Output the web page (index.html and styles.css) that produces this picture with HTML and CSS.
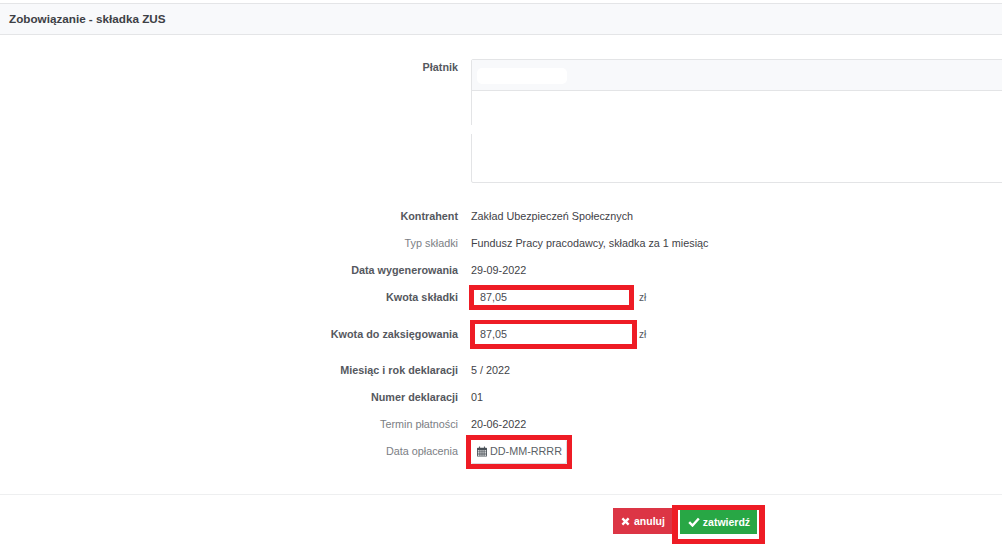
FILE: index.html
```html
<!DOCTYPE html>
<html lang="pl">
<head>
<meta charset="utf-8">
<title>Zobowiązanie - składka ZUS</title>
<link rel="stylesheet" href="styles.css">
</head>
<body>
<div class="page">
  <header class="head">Zobowiązanie - składka ZUS</header>
  <main class="form">
    <div class="row row-card">
      <div class="label strong">Płatnik</div>
      <div class="card">
        <div class="card-head"><span class="smear"></span></div>
        <div class="card-body"><span class="gap"></span></div>
      </div>
    </div>
    <div class="row"><div class="label strong">Kontrahent</div><div class="value">Zakład Ubezpieczeń Społecznych</div></div>
    <div class="row"><div class="label">Typ składki</div><div class="value">Fundusz Pracy pracodawcy, składka za 1 miesiąc</div></div>
    <div class="row"><div class="label strong">Data wygenerowania</div><div class="value">29-09-2022</div></div>
    <div class="row row-amount">
      <div class="label strong">Kwota składki</div>
      <div class="value amount">
        <div class="mark mark-a"><div class="input">87,05</div></div>
        <span class="unit">zł</span>
      </div>
    </div>
    <div class="row row-tall">
      <div class="label strong">Kwota do zaksięgowania</div>
      <div class="value amount">
        <div class="mark mark-b"><div class="input">87,05</div></div>
        <span class="unit unit-b">zł</span>
      </div>
    </div>
    <div class="row"><div class="label strong">Miesiąc i rok deklaracji</div><div class="value">5 / 2022</div></div>
    <div class="row"><div class="label strong">Numer deklaracji</div><div class="value">01</div></div>
    <div class="row"><div class="label">Termin płatności</div><div class="value">20-06-2022</div></div>
    <div class="row row-amount">
      <div class="label">Data opłacenia</div>
      <div class="value amount">
        <div class="mark mark-c">
          <div class="date">
            <svg class="cal" viewBox="0 0 12 12" width="10" height="11" aria-hidden="true">
              <path fill="#495057" fill-rule="evenodd" d="M2.5 0h1.2v1.5h4.6V0h1.2v1.5H11a1 1 0 0 1 1 1V11a1 1 0 0 1-1 1H1a1 1 0 0 1-1-1V2.500a1 1 0 0 1 1-1h1.500zM1 4.500V6h2V4.500zm3 0V6h1.500V4.500zm2.500 0V6H8V4.500zm2.500 0V6h2V4.500zM1 7v1.500h2V7zm3 0v1.500h1.500V7zm2.500 0v1.500H8V7zM9 7v1.500h2V7zM1 9.500V11h2V9.500zm3 0V11h1.500V9.500zm2.500 0V11H8V9.500zm2.500 0V11h2V9.500z"/>
            </svg>
            <span>DD-MM-RRRR</span>
          </div>
        </div>
      </div>
    </div>
  </main>
  <footer class="foot">
    <button class="btn btn-cancel" type="button">
      <svg viewBox="0 0 10 10" width="9" height="9" aria-hidden="true"><path d="M1.500 1.500l7 7M8.500 1.500l-7 7" stroke="#fff" stroke-width="2.600" fill="none"/></svg>
      anuluj
    </button>
    <div class="mark mark-d">
      <button class="btn btn-ok" type="button">
        <svg viewBox="0 0 12 10" width="12" height="10" aria-hidden="true"><path d="M1.200 5.200l3.300 3.300 6.300-7" stroke="#fff" stroke-width="2.400" fill="none"/></svg>
        zatwierdź
      </button>
    </div>
  </footer>
</div>
</body>
</html>
```
FILE: styles.css
```css
* { box-sizing: border-box; }
html, body { margin: 0; padding: 0; background: #fff; }
.page {
  width: 1002px;
  height: 544px;
  overflow: hidden;
  padding-top: 3px;
  font-family: "Liberation Sans", Arial, sans-serif;
  font-size: 10.8px;
  color: #3f4247;
}
.head {
  height: 32px;
  padding-left: 9px;
  line-height: 29px;
  font-size: 11.7px;
  font-weight: bold;
  color: #3d4045;
  background: #f8f9fb;
  border-top: 1px solid #e4e5e7;
  border-bottom: 1px solid #e4e5e7;
}
.form { padding-top: 24px; height: 460px; border-bottom: 1px solid #eeeff0; }
.row {
  display: flex;
  height: 27px;
  padding-bottom: 2px;
  align-items: center;
  white-space: nowrap;
}
.row-card { height: 124px; padding-bottom: 0; align-items: flex-start; margin-bottom: 20px; }
.row-tall { height: 46px; padding-bottom: 0; }
.row-amount { padding-bottom: 0; }
.label {
  width: 458px;
  text-align: right;
  color: #7b7e84;
  flex: none;
}
.row-amount .label { padding-bottom: 2px; }
.label.strong { font-weight: bold; color: #55585e; }
.row-card .label { padding-top: 2px; }
.value { margin-left: 13px; display: flex; align-items: center; }
.card {
  position: relative;
  margin-left: 13px;
  width: 560px;
  height: 124px;
  flex: none;
  border: 1px solid #e3e4e6;
  border-radius: 2px 0 0 2px;
}
.card-head {
  height: 31px;
  background: #f8f9fb;
  border-bottom: 1px solid #e3e4e6;
}
.smear {
  position: absolute;
  left: 5px;
  top: 8px;
  width: 90px;
  height: 16px;
  background: #fff;
  border-radius: 5px;
}
.gap {
  position: absolute;
  left: -1px;
  top: 65px;
  width: 1px;
  height: 9px;
  background: #fff;
}
.amount { margin-left: 11px; }
.mark { border-style: solid; border-color: #ee1c25; background: #fff; flex: none; }
.mark-a { width: 165px; height: 25px; border-width: 5px; }
.mark-b { width: 167px; height: 29px; border-width: 4px 5px 5px; margin-left: 1px; }
.mark-c { width: 106px; height: 34px; border-width: 5px; margin-left: -3px; }
.mark-d { width: 93px; height: 39px; border-width: 5px 6px; padding: 0 2px; }
.input { padding-left: 6px; line-height: 15px; color: #494c52; }
.mark-b .input { padding-left: 5px; line-height: 20px; }
.unit { margin-left: 5px; font-size: 10px; color: #55585e; }
.unit-b { margin-left: 2px; }
.date {
  display: flex;
  align-items: center;
  gap: 3px;
  height: 24px;
  padding-left: 6px;
  color: #5b5f66;
  border-right: 1px solid #dcdde0;
  border-bottom: 1px solid #dcdde0;
  border-radius: 2px;
}
.cal { flex: none; }
.foot {
  display: flex;
  align-items: flex-start;
  padding: 10px 0 0 613px;
}
.btn {
  display: flex;
  align-items: center;
  justify-content: center;
  border: 0;
  padding: 0 0 0 1px;
  color: #fff;
  font: bold 10.5px "Liberation Sans", Arial, sans-serif;
}
.btn-cancel { gap: 4px; width: 59px; height: 26px; margin-top: 3px; background: #dc3545; }
.btn-ok { gap: 3px; width: 77px; height: 24px; background: #28a745; }
```
